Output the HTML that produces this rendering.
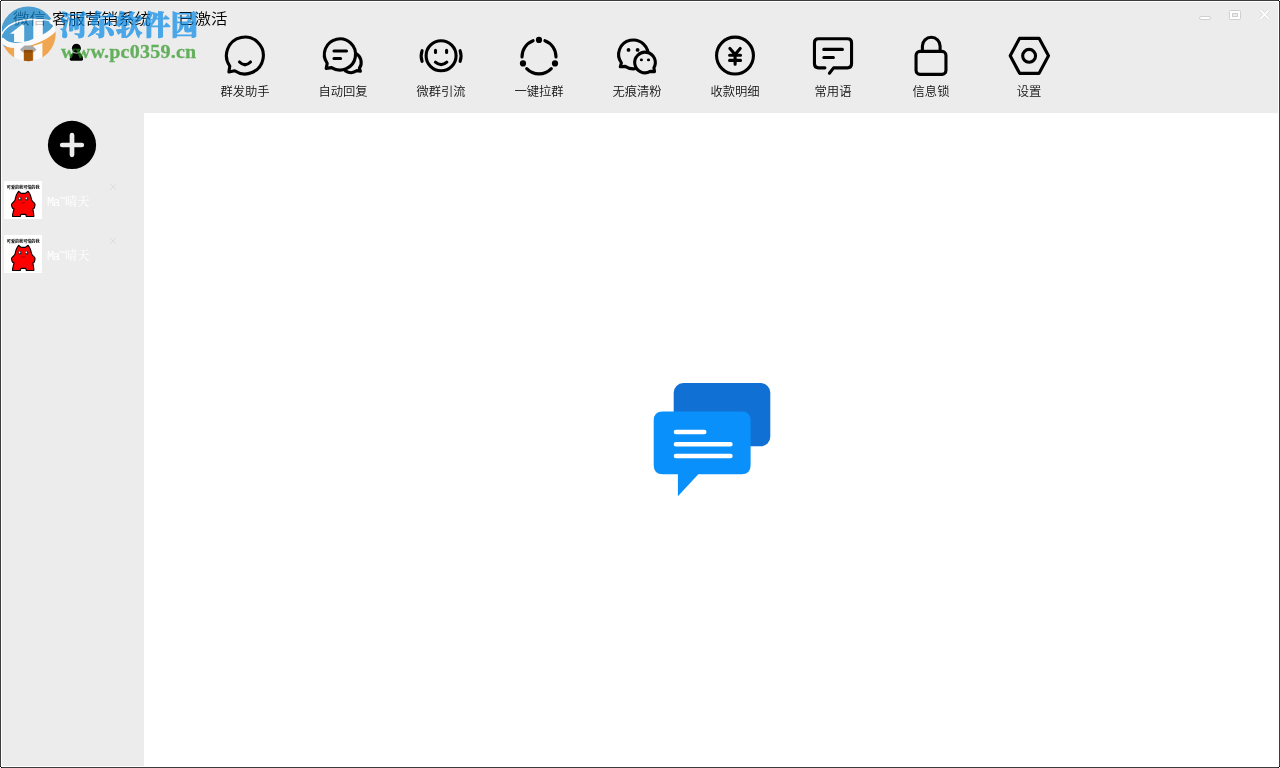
<!DOCTYPE html>
<html lang="zh-CN">
<head>
<meta charset="utf-8">
<title>微信 客服营销系统 已激活</title>
<style>
  html, body { margin: 0; padding: 0; }
  body {
    width: 1280px; height: 768px; overflow: hidden; position: relative;
    background: #ececec;
    font-family: "Liberation Sans", "Noto Sans CJK SC", sans-serif;
    color: #111;
  }
  #root { position: absolute; left: 0; top: 0; width: 1280px; height: 768px; will-change: transform; }
  .abs { position: absolute; }
  #frame {
    position: absolute; left: 0; top: 0; width: 1278px; height: 766px;
    border: 1px solid #3c3c3c; z-index: 50; pointer-events: none;
    box-shadow: inset 0 0 0 1px #ffffff;
  }
  .cpx { position: absolute; width: 1px; height: 1px; z-index: 60; }
  #content {
    position: absolute; left: 144px; top: 113px; width: 1135px; height: 654px;
    background: #ffffff;
  }
  #title {
    position: absolute; left: 0; top: 6.5px; height: 24px; line-height: 24px;
    font-size: 16px; font-weight: 350; color: #000; white-space: nowrap;
  }
  #title span { position: absolute; top: 0; display: block; transform: scale(1.03, 0.92); transform-origin: 0 50%; }
  .tool {
    position: absolute; top: 30px; width: 98px; height: 76px;
  }
  .tool svg { position: absolute; left: 24px; top: 1.35px; width: 50px; height: 50px; overflow: visible; }
  .tool .lbl {
    position: absolute; left: 0; width: 98px; top: 53px; height: 18px; line-height: 18px;
    text-align: center; font-size: 12.3px; font-weight: 350; color: #111; white-space: nowrap;
  }
  .ico { fill: none; stroke: #000; stroke-width: 3.1; stroke-linecap: round; stroke-linejoin: round; }
  .acct { position: absolute; left: 0; width: 144px; height: 54px; }
  .acct .ava { position: absolute; left: 4px; top: 0; width: 38px; height: 38px; background: #fff; }
  .acct .nm {
    position: absolute; left: 47px; top: 13px; height: 18px; line-height: 18px;
    font-size: 12px; color: #ffffff; white-space: nowrap;
    font-family: "Liberation Mono", "Noto Serif CJK SC", serif;
  }
  .acct .cls { position: absolute; left: 109px; top: 2px; width: 8px; height: 8px; }
  .acct .nm .lat { letter-spacing: -1.2px; }
  .acct .nm .tl { position: relative; top: -4px; }
  .acct .nm { letter-spacing: 0.4px; }
</style>
</head>
<body>
<div id="root">
<div id="content"></div>

<!-- title -->
<div id="title"><span style="left:13px">微信</span><span style="left:52px">客服营销系统</span><span style="left:178px">已激活</span></div>

<!-- watermark -->
<svg class="abs" style="left:0;top:4px;width:60px;height:62px;z-index:20" viewBox="0 4 60 62">
  <defs><clipPath id="lg"><circle cx="28.3" cy="33.8" r="27.4"/></clipPath></defs>
  <g clip-path="url(#lg)" opacity="0.72">
    <rect x="0" y="4" width="60" height="62" fill="#0e82c8"/>
    <path d="M-2 44 Q6 50 28 44 Q50 36 58 26 L60 70 H-2 Z" fill="#f28a14"/>
    <path d="M33.3 20 H42.8 V35.5 L33.3 40 Z" fill="#ffffff"/>
    <path d="M10 33.8 L22 24.6 H24.2 V42 H14.1 V33.8 Z" fill="#ffffff"/>
    <path d="M14.1 47 H23.8 V66 H14.1 Z M33.3 46 L42.4 43 V66 H33.3 Z" fill="#ffffff"/>
    <path d="M0.5 38 Q4 22 30 19.5 Q48 19 52.5 22" fill="none" stroke="#ffffff" stroke-width="1.3"/>
    <path d="M2.5 40.5 Q10 49 30 43 Q50 36 55.5 27.5 Q56.5 24 52 21.5" fill="none" stroke="#ffffff" stroke-width="5.2" stroke-linecap="round"/>
  </g>
  <g clip-path="url(#lg)">
    <path d="M23.9 49.7 H32.8 V62 H23.9 Z" fill="#a25608"/>
    <path d="M23.9 49.7 H32.8 V52.4 H23.9 Z" fill="#8a4a0a"/>
    <path d="M20 49.4 L24.6 45.6 H31.9 L36.5 49.4 L33.6 52.4 H32.8 V49.7 H23.9 V52.4 H23 Z" fill="#a8a8a8"/>
  </g>
</svg>
<div class="abs" style="left:60px;top:8px;width:140px;height:36px;line-height:36px;font-size:27px;font-weight:900;color:#0a8be6;-webkit-text-stroke:0.9px #0a8be6;opacity:0.72;white-space:nowrap;letter-spacing:0.75px;z-index:20;font-family:'Liberation Serif','Noto Serif CJK SC',serif">河东软件园</div>
<div class="abs" style="left:61px;top:37.7px;width:140px;height:26px;line-height:26px;font-size:20px;letter-spacing:0.25px;font-weight:700;color:#2a9620;-webkit-text-stroke:0.3px #2a9620;opacity:0.7;white-space:nowrap;z-index:20;transform:scaleY(0.92);transform-origin:0 20px;font-family:'Liberation Serif',serif">www.pc0359.cn</div>

<!-- user silhouette -->
<svg class="abs" style="left:66px;top:41px;width:20px;height:22px" viewBox="66 41 20 22">
  <path d="M69.8 59.3 V58.6 A6.6 6.5 0 0 1 83 58.6 V59.3 Q83 60.7 81.6 60.7 H71.2 Q69.8 60.7 69.8 59.3 Z" fill="#000"/>
  <circle cx="76.4" cy="48.2" r="5.4" fill="#f4f4f4"/>
  <circle cx="76.4" cy="48.2" r="4.5" fill="#000"/>
</svg>

<!-- window buttons -->
<svg class="abs" style="left:1195px;top:6px;width:80px;height:18px" viewBox="1195 6 80 18">
  <rect x="1199.5" y="16.5" width="11" height="3" rx="1.5" ry="1.5" fill="#fff" stroke="#cfcfcf" stroke-width="1"/>
  <rect x="1229.5" y="10.5" width="11" height="9" rx="1" ry="1" fill="#fff" stroke="#cfcfcf" stroke-width="1"/>
  <rect x="1232.5" y="13.5" width="5" height="3" fill="#ececec" stroke="#cfcfcf" stroke-width="1"/>
  <path d="M1260.4 10.2 L1268.8 18.8 M1268.8 10.2 L1260.4 18.8" fill="none" stroke="#d8d8d8" stroke-width="3.2" stroke-linecap="butt"/>
  <path d="M1260.4 10.2 L1268.8 18.8 M1268.8 10.2 L1260.4 18.8" fill="none" stroke="#fff" stroke-width="1.8" stroke-linecap="butt"/>
</svg>

<!-- sidebar -->
<svg class="abs" style="left:44px;top:117px;width:56px;height:56px" viewBox="44 117 56 56">
  <circle cx="72" cy="144.9" r="24.1" fill="#000"/>
  <path d="M62.2 145 H81.8 M72 135.2 V154.8" fill="none" stroke="#ececec" stroke-width="4.7" stroke-linecap="round"/>
</svg>

<div class="acct" style="top:181px">
  <svg class="ava" viewBox="0 0 38 38">
    <rect width="38" height="38" fill="#fff"/>
    <text x="19.2" y="7.9" text-anchor="middle" font-size="4.1" font-weight="700" fill="#000" font-family="'Liberation Sans','Noto Sans CJK SC',sans-serif">可爱的我可怕的我</text>
    <path d="M14.6 10.3 Q15.8 11 17 12.4 H21.4 Q22.8 11 24.1 10.3 Q25.6 12 26.4 14.2 L27.8 19.3 Q29 21 30.4 22.2 Q31.3 23 31 24.4 L30.4 26.8 Q29.8 27.6 28.9 27.9 L29.8 33.7 V35.5 H22.3 L21.8 33.4 H16.9 L16.3 35.5 H8.6 V33.7 L10 27.9 Q8.9 27.6 8.3 26.8 L7.5 24.4 Q7.3 23 8.3 22.2 Q9.8 21 10.9 19.3 L12.3 14.2 Q13.2 12 14.6 10.3 Z" fill="#ff0000" stroke="#000" stroke-width="1.1" stroke-linejoin="round"/>
    <circle cx="16" cy="17.9" r="1.8" fill="#333"/><circle cx="22.7" cy="17.9" r="1.8" fill="#333"/>
    <circle cx="15.6" cy="17.4" r="0.8" fill="#fff"/><circle cx="22.3" cy="17.4" r="0.8" fill="#fff"/>
    <path d="M17.4 21.6 Q18.4 22.6 19.4 21.8 Q20 22.4 20.8 21.4" fill="none" stroke="#600" stroke-width="0.6"/>
  </svg>
  <div class="nm"><span class="lat">Ma<span class="tl">~</span></span>晴天</div>
  <svg class="cls" viewBox="0 0 8 8"><path d="M0.8 0.8 L7.2 7.2 M7.2 0.8 L0.8 7.2" stroke="#dcdcdc" stroke-width="0.9" fill="none"/></svg>
</div>

<div class="acct" style="top:235px">
  <svg class="ava" viewBox="0 0 38 38">
    <rect width="38" height="38" fill="#fff"/>
    <text x="19.2" y="7.9" text-anchor="middle" font-size="4.1" font-weight="700" fill="#000" font-family="'Liberation Sans','Noto Sans CJK SC',sans-serif">可爱的我可怕的我</text>
    <path d="M14.6 10.3 Q15.8 11 17 12.4 H21.4 Q22.8 11 24.1 10.3 Q25.6 12 26.4 14.2 L27.8 19.3 Q29 21 30.4 22.2 Q31.3 23 31 24.4 L30.4 26.8 Q29.8 27.6 28.9 27.9 L29.8 33.7 V35.5 H22.3 L21.8 33.4 H16.9 L16.3 35.5 H8.6 V33.7 L10 27.9 Q8.9 27.6 8.3 26.8 L7.5 24.4 Q7.3 23 8.3 22.2 Q9.8 21 10.9 19.3 L12.3 14.2 Q13.2 12 14.6 10.3 Z" fill="#ff0000" stroke="#000" stroke-width="1.1" stroke-linejoin="round"/>
    <circle cx="16" cy="17.9" r="1.8" fill="#333"/><circle cx="22.7" cy="17.9" r="1.8" fill="#333"/>
    <circle cx="15.6" cy="17.4" r="0.8" fill="#fff"/><circle cx="22.3" cy="17.4" r="0.8" fill="#fff"/>
    <path d="M17.4 21.6 Q18.4 22.6 19.4 21.8 Q20 22.4 20.8 21.4" fill="none" stroke="#600" stroke-width="0.6"/>
  </svg>
  <div class="nm"><span class="lat">Ma<span class="tl">~</span></span>晴天</div>
  <svg class="cls" viewBox="0 0 8 8"><path d="M0.8 0.8 L7.2 7.2 M7.2 0.8 L0.8 7.2" stroke="#dcdcdc" stroke-width="0.9" fill="none"/></svg>
</div>

<!-- center illustration -->
<svg class="abs" style="left:650px;top:380px;width:124px;height:120px" viewBox="650 380 124 120">
  <rect x="673.7" y="383.1" width="96.6" height="63.1" rx="9.5" ry="9.5" fill="#1070d3"/>
  <path d="M662.7 411.5 H741.6 Q750.6 411.5 750.6 420.5 V465.2 Q750.6 474.2 741.6 474.2 H698.3 L677.9 496.3 V474.2 H662.7 Q653.7 474.2 653.7 465.2 V420.5 Q653.7 411.5 662.7 411.5 Z" fill="#0a90fa"/>
  <path d="M676 432 H704.2 M676 444.2 H730.4 M676 456 H730.4" fill="none" stroke="#fff" stroke-width="4.6" stroke-linecap="round"/>
</svg>

<!-- toolbar -->
<div class="tool" style="left:196px">
  <svg viewBox="220 31 50 50">
    <path class="ico" d="M229.8 66.1 A18.45 18.45 0 1 1 234.6 70.8 L228.9 71.9 Z"/>
    <path class="ico" d="M239.5 62 Q245 67.5 250.5 62"/>
  </svg>
  <div class="lbl">群发助手</div>
</div>

<div class="tool" style="left:294px">
  <svg viewBox="318 31 50 50">
    <path class="ico" d="M355.8 53.4 A10.2 10.2 0 0 1 359.4 68.2 L360.4 71.2 L357 70.6 A10.2 10.2 0 0 1 345.4 70.9"/>
    <path class="ico" d="M327.2 63.4 A15.6 15.6 0 1 1 331.6 67.6 L326.2 68.4 Z"/>
    <path class="ico" d="M334 51 H346.5 M334 58.5 H340.6"/>
  </svg>
  <div class="lbl">自动回复</div>
</div>

<div class="tool" style="left:392px">
  <svg viewBox="416 31 50 50">
    <circle class="ico" cx="441.1" cy="55.8" r="15"/>
    <path class="ico" d="M435.5 50.4 V52.4 M446.6 50.4 V52.4"/>
    <path class="ico" d="M435.4 62.2 Q441.1 67.2 446.8 62.2"/>
    <path class="ico" d="M422.1 50.7 Q420.1 56 422.1 61.4 M460.1 50.7 Q462.1 56 460.1 61.4"/>
  </svg>
  <div class="lbl">微群引流</div>
</div>

<div class="tool" style="left:490px">
  <svg viewBox="514 31 50 50">
    <path class="ico" d="M533.1 40.7 A17 17 0 0 0 522 57"/>
    <path class="ico" d="M544.9 40.7 A17 17 0 0 1 556 57"/>
    <path class="ico" d="M526.7 68.6 A17 17 0 0 0 551.3 68.6"/>
    <circle cx="539" cy="39.9" r="3.1" fill="#000"/>
    <circle cx="523" cy="63.4" r="3.1" fill="#000"/>
    <circle cx="555" cy="63.4" r="3.1" fill="#000"/>
  </svg>
  <div class="lbl">一键拉群</div>
</div>

<div class="tool" style="left:588px">
  <svg viewBox="612 31 50 50">
    <path class="ico" d="M621.4 62.8 A14.7 14.4 0 1 1 625.2 66.4 L620.3 66.8 Z"/>
    <circle cx="628.5" cy="49.9" r="1.9" fill="#000"/>
    <circle cx="637.6" cy="49.9" r="1.9" fill="#000"/>
    <path class="ico" style="fill:#ececec" d="M653.9 67.7 A10.3 10.3 0 1 0 650.2 71.4 L654.5 71.6 Z"/>
    <ellipse cx="641.4" cy="59.9" rx="1.55" ry="1.35" fill="#000"/>
    <ellipse cx="648.5" cy="59.9" rx="1.55" ry="1.35" fill="#000"/>
  </svg>
  <div class="lbl">无痕清粉</div>
</div>

<div class="tool" style="left:686px">
  <svg viewBox="710 31 50 50">
    <circle class="ico" cx="735" cy="55.6" r="18.45"/>
    <path class="ico" d="M729.9 48.4 L735.1 54.6 L740.2 48.4 M729.6 55.2 H740.5 M729.6 60.4 H740.5 M735.1 54.6 V64.2"/>
  </svg>
  <div class="lbl">收款明细</div>
</div>

<div class="tool" style="left:784px">
  <svg viewBox="808 31 50 50">
    <path class="ico" d="M824.9 67.85 H818.45 Q814.45 67.85 814.45 63.85 V42.75 Q814.45 38.75 818.45 38.75 H847.55 Q851.55 38.75 851.55 42.75 V63.85 Q851.55 67.85 847.55 67.85 H833.6 L829.4 73.2"/>
    <path class="ico" d="M823.8 49.4 H842.4 M823.8 57.45 H833.4"/>
  </svg>
  <div class="lbl">常用语</div>
</div>

<div class="tool" style="left:882px">
  <svg viewBox="906 31 50 50">
    <rect class="ico" x="916.05" y="51.4" width="29.9" height="22.95" rx="3.9" ry="3.9"/>
    <path class="ico" d="M922.4 51.4 V46.1 A8.85 8.85 0 0 1 940.1 46.1 V51.4"/>
  </svg>
  <div class="lbl">信息锁</div>
</div>

<div class="tool" style="left:980px">
  <svg viewBox="1004 31 50 50">
    <path class="ico" d="M1010.2 55.85 L1019.6 38.35 H1039.1 L1048.5 55.85 L1039.1 73.35 H1019.6 Z"/>
    <circle class="ico" cx="1029.1" cy="55.85" r="6.45"/>
  </svg>
  <div class="lbl">设置</div>
</div>

<div id="frame"></div>
<i class="cpx" style="left:0;top:0;background:#fff"></i><i class="cpx" style="left:1px;top:0;background:#000"></i><i class="cpx" style="left:0;top:1px;background:#000"></i>
<i class="cpx" style="left:1279px;top:0;background:#fff"></i><i class="cpx" style="left:1278px;top:0;background:#000"></i><i class="cpx" style="left:1279px;top:1px;background:#000"></i>
<i class="cpx" style="left:0;top:767px;background:#fff"></i><i class="cpx" style="left:1px;top:767px;background:#000"></i><i class="cpx" style="left:0;top:766px;background:#000"></i>
<i class="cpx" style="left:1279px;top:767px;background:#fff"></i><i class="cpx" style="left:1278px;top:767px;background:#000"></i><i class="cpx" style="left:1279px;top:766px;background:#000"></i>
</div>
</body>
</html>
